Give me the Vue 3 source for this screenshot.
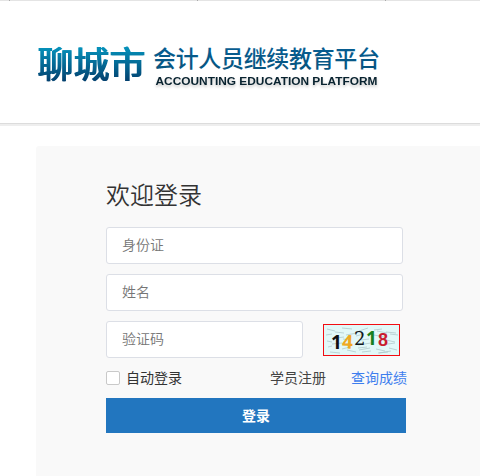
<script setup>
import { ref } from 'vue'

const idCard = ref('')
const fullName = ref('')
const code = ref('')
const remember = ref(false)
</script>

<template>
  <div class="page">
    <div class="strip"><i></i><i></i><i></i></div>
    <header class="header">
      <svg class="logo" width="352" height="60" viewBox="0 0 352 60">
        <defs>
          <linearGradient id="city" gradientUnits="userSpaceOnUse" x1="0" y1="8" x2="0" y2="41">
            <stop offset="0" stop-color="#0590b9" />
            <stop offset="1" stop-color="#03416f" />
          </linearGradient>
          <linearGradient id="name" gradientUnits="userSpaceOnUse" x1="0" y1="8" x2="0" y2="30">
            <stop offset="0" stop-color="#075d91" />
            <stop offset="1" stop-color="#06547f" />
          </linearGradient>
          <filter id="widen" x="-5%" y="-10%" width="110%" height="120%" color-interpolation-filters="sRGB">
            <feOffset in="SourceGraphic" dx="1" result="right" />
            <feMerge>
              <feMergeNode in="right" />
              <feMergeNode in="SourceGraphic" />
            </feMerge>
          </filter>
        </defs>
        <text class="city" x="1" y="38" textLength="108" fill="url(#city)" filter="url(#widen)">聊城市</text>
        <text class="name" x="117" y="27" textLength="227" fill="url(#name)">会计人员继续教育平台</text>
        <text class="english" x="119.500" y="45" textLength="222" lengthAdjust="spacingAndGlyphs">ACCOUNTING EDUCATION PLATFORM</text>
      </svg>
    </header>
    <main class="panel">
      <h1>欢迎登录</h1>
      <form class="form" @submit.prevent>
        <input v-model="idCard" class="field" placeholder="身份证" />
        <input v-model="fullName" class="field" placeholder="姓名" />
        <div class="code-row">
          <input v-model="code" class="field short" placeholder="验证码" />
          <svg class="captcha" width="77" height="32" viewBox="0 0 77 32">
            <rect x=".5" y=".5" width="76" height="31" fill="#e2f8f8" stroke="#f20d12" />
            <g fill="none" stroke="#a4bfc2" stroke-width=".8" opacity=".8">
              <path d="M4 5l8 2m7-3l10 1m7 2l9-3m6 2l8-1m4 3l10 1M3 11l6-1m14 1l11-2m17 2l10 2m6-3l8 1M4 17l5 1m11-3l7 1m11 0l8-1m17 1l9 2M5 23l4-1m10 3l8-2m9 3l11-2m6 1l9 2m4-3l8 2M7 28l10 1m7-3l9 2m6 0l9-1m8 2l12-2" />
              <path d="M12 8l9 1m12 3l8-2m13-3l10 2M13 14l8-1m14 8l13-2m10 2l14-2M9 20l10-1m16 5l9-1m11 6l10-1" />
            </g>
            <g class="digits">
              <text x="8" y="24.500" fill="#111">1</text>
              <text x="19" y="24.500" fill="#efaa23" transform="rotate(3 25 18)">4</text>
              <text class="serif" x="31" y="21" fill="#101820">2</text>
              <text x="43" y="21" fill="#168020">1</text>
              <text class="narrow" x="55" y="21.500" fill="#c91e31">8</text>
            </g>
          </svg>
        </div>
        <div class="options">
          <label><input v-model="remember" type="checkbox" /><span>自动登录</span></label>
          <a class="register">学员注册</a>
          <a class="score">查询成绩</a>
        </div>
        <button type="submit">登录</button>
      </form>
    </main>
  </div>
</template>

<style>
body { background: #fff; overflow: hidden; }
</style>

<style scoped>
* { box-sizing: border-box; }
.page {
  height: 476px;
  overflow: hidden;
  display: flex;
  flex-direction: column;
  font-family: "Noto Sans CJK SC", sans-serif;
  font-size: 14px;
  color: #333;
}
.strip {
  height: 1px;
  flex: none;
  display: flex;
  gap: 187px;
  padding-left: 9px;
  background: #e4e4e4;
}
.strip i { width: 1px; background: #aaa; }
.header {
  height: 125px;
  flex: none;
  padding: 39px 0 0 36px;
  border-bottom: 2px solid #eee;
  box-shadow: inset 0 -1px #dcdcdc;
}
.logo { display: block; overflow: visible; }
.city { font: 500 36px "Noto Sans CJK SC", sans-serif; }
.name { font: 500 23px "Noto Sans CJK SC", sans-serif; }
.english {
  font: 700 11px "Liberation Sans", Arial, sans-serif;
  fill: #08222f;
  filter: drop-shadow(0 2px 1.500px rgba(100, 100, 100, .4));
}
.panel {
  flex: 1;
  margin: 20px 0 0 36px;
  padding: 30px 0 0 70px;
  background: #f9f9f9;
  border-top-left-radius: 3px;
}
h1 { margin: 0; height: 51px; font-size: 24px; line-height: 35px; font-weight: 350; color: #333; }
.form { width: 302px; display: flex; flex-direction: column; gap: 10px; }
.field {
  width: 297px;
  height: 37px;
  padding: 0 15px 3px;
  border: 1px solid #dcdfe6;
  border-radius: 3px;
  background: #fff;
  font: 350 14px "Noto Sans CJK SC", sans-serif;
  outline: none;
}
.field::placeholder { color: #757575; opacity: 1; }
.code-row { display: flex; gap: 20px; }
.short { width: 197px; }
.captcha { margin-top: 3px; }
.digits { font: 700 19px "Noto Sans", sans-serif; }
.serif { font: 400 18px "DejaVu Serif", serif; }
.narrow { font: 700 18px "Liberation Sans", sans-serif; }
.options { display: flex; height: 20px; align-items: center; line-height: 20px; }
.options span, .options a { padding-bottom: 2px; }
label { display: flex; align-items: center; gap: 6px; width: 164px; }
label input {
  appearance: none;
  width: 14px;
  height: 14px;
  margin: 0;
  border: 1px solid #c9c9c9;
  border-radius: 2px;
  background: #fff;
}
.register { width: 81px; color: #444; }
.score { color: #3e7eee; }
button {
  width: 300px;
  height: 35px;
  padding: 0 0 2px;
  border: 0;
  background: #2276bf;
  color: #fff;
  font: 700 14px "Noto Sans CJK SC", sans-serif;
}
</style>
